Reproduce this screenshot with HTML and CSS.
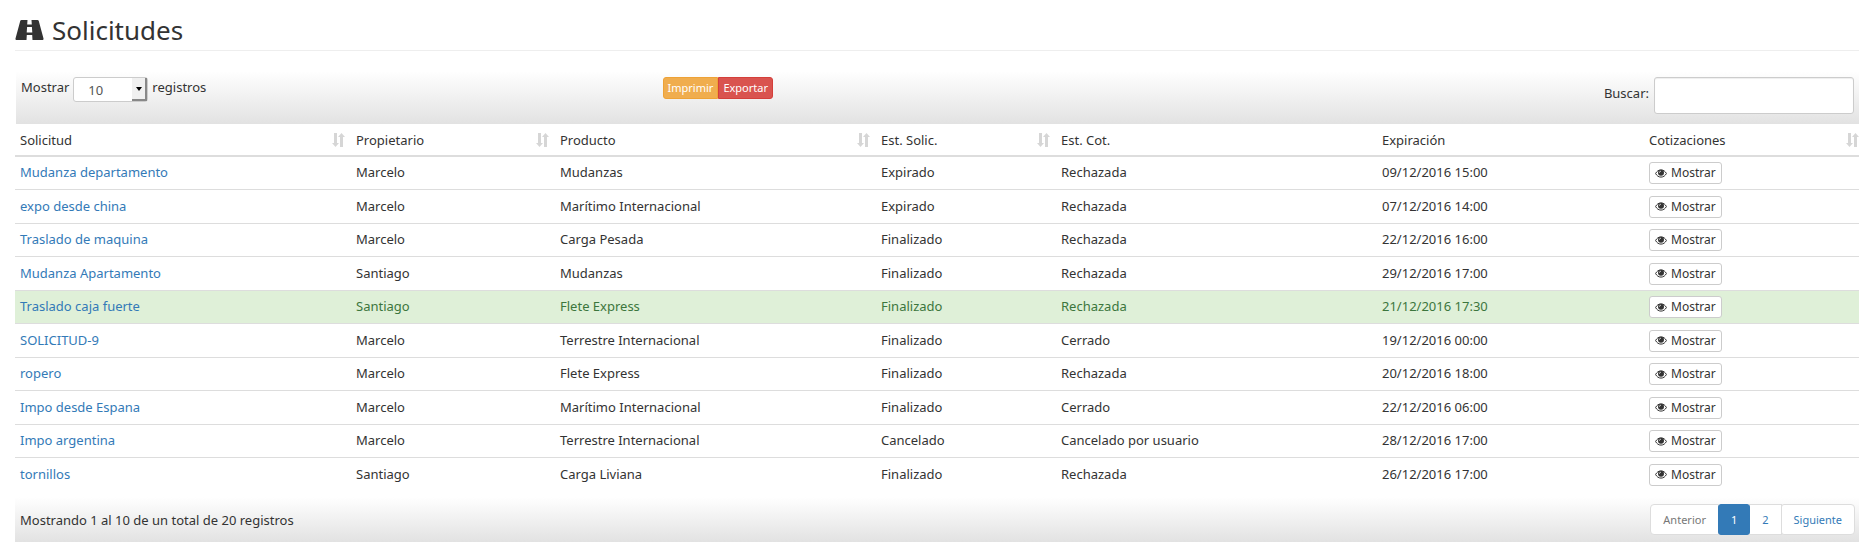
FILE: index.html
```html
<!DOCTYPE html>
<html lang="es">
<head>
<meta charset="utf-8">
<title>Solicitudes</title>
<link rel="stylesheet" href="styles.css">
</head>
<body>
<svg class="sprite" aria-hidden="true">
  <symbol id="eye" viewBox="0 0 24 18">
    <path d="M1.200 9C3.500 4.500 7.300 1.800 12 1.800S20.500 4.500 22.800 9C20.500 13.500 16.700 16.200 12 16.200S3.500 13.500 1.200 9z" fill="none" stroke="currentColor" stroke-width="2"/>
    <circle cx="12" cy="7.500" r="6"/>
    <path d="M8.800 7.500A3.200 3.200 0 0 1 12 4.300" fill="none" stroke="#fff" stroke-width="1.400"/>
  </symbol>
  <symbol id="sort" viewBox="0 0 13 14">
    <path d="M2 0h3v10h2l-3.500 4L0 10h2zM8 14h3V4h2L9.500 0 6 4h2z"/>
  </symbol>
</svg>
<main class="page">
  <h1 class="title">
    <svg class="road" viewBox="0 0 28 20" aria-hidden="true"><path fill-rule="evenodd" d="M6 0h6l-.3 4.500h4.600L16 0h6c.6 0 1 .3 1.200.8L28 18.500c.2.900-.2 1.500-1 1.500H17l-.3-5h-5.400L11 20H1c-.8 0-1.200-.6-1-1.500L4.800.8C5 .3 5.400 0 6 0zM11.600 7l-.4 5.500h5.600L16.400 7z"/></svg>
    Solicitudes
  </h1>
  <div class="toolbar">
    <div class="length">
      <label for="length">Mostrar</label>
      <span class="picker">
        <select id="length"><option>10</option><option>25</option><option>50</option></select>
        <span class="picker-arrow"></span>
      </span>
      <label for="length">registros</label>
    </div>
    <div class="actions"><button class="action print" type="button">Imprimir</button><button class="action export" type="button">Exportar</button></div>
    <div class="search">
      <label for="search">Buscar:</label>
      <input id="search" type="search">
    </div>
  </div>
  <table class="requests">
    <colgroup><col class="c-name"><col class="c-owner"><col class="c-product"><col class="c-state"><col class="c-quote"><col class="c-date"><col></colgroup>
    <thead>
      <tr>
        <th><span class="head">Solicitud<svg class="sort"><use href="#sort"/></svg></span></th>
        <th><span class="head">Propietario<svg class="sort"><use href="#sort"/></svg></span></th>
        <th><span class="head">Producto<svg class="sort"><use href="#sort"/></svg></span></th>
        <th><span class="head">Est. Solic.<svg class="sort"><use href="#sort"/></svg></span></th>
        <th>Est. Cot.</th>
        <th>Expiración</th>
        <th><span class="head">Cotizaciones<svg class="sort"><use href="#sort"/></svg></span></th>
      </tr>
    </thead>
    <tbody>
      <tr><td><a href="#">Mudanza departamento</a></td><td>Marcelo</td><td>Mudanzas</td><td>Expirado</td><td>Rechazada</td><td>09/12/2016 15:00</td><td><button class="show" type="button"><svg class="eye"><use href="#eye"/></svg>Mostrar</button></td></tr>
      <tr><td><a href="#">expo desde china</a></td><td>Marcelo</td><td>Marítimo Internacional</td><td>Expirado</td><td>Rechazada</td><td>07/12/2016 14:00</td><td><button class="show" type="button"><svg class="eye"><use href="#eye"/></svg>Mostrar</button></td></tr>
      <tr><td><a href="#">Traslado de maquina</a></td><td>Marcelo</td><td>Carga Pesada</td><td>Finalizado</td><td>Rechazada</td><td>22/12/2016 16:00</td><td><button class="show" type="button"><svg class="eye"><use href="#eye"/></svg>Mostrar</button></td></tr>
      <tr><td><a href="#">Mudanza Apartamento</a></td><td>Santiago</td><td>Mudanzas</td><td>Finalizado</td><td>Rechazada</td><td>29/12/2016 17:00</td><td><button class="show" type="button"><svg class="eye"><use href="#eye"/></svg>Mostrar</button></td></tr>
      <tr class="success"><td><a href="#">Traslado caja fuerte</a></td><td>Santiago</td><td>Flete Express</td><td>Finalizado</td><td>Rechazada</td><td>21/12/2016 17:30</td><td><button class="show" type="button"><svg class="eye"><use href="#eye"/></svg>Mostrar</button></td></tr>
      <tr><td><a href="#">SOLICITUD-9</a></td><td>Marcelo</td><td>Terrestre Internacional</td><td>Finalizado</td><td>Cerrado</td><td>19/12/2016 00:00</td><td><button class="show" type="button"><svg class="eye"><use href="#eye"/></svg>Mostrar</button></td></tr>
      <tr><td><a href="#">ropero</a></td><td>Marcelo</td><td>Flete Express</td><td>Finalizado</td><td>Rechazada</td><td>20/12/2016 18:00</td><td><button class="show" type="button"><svg class="eye"><use href="#eye"/></svg>Mostrar</button></td></tr>
      <tr><td><a href="#">Impo desde Espana</a></td><td>Marcelo</td><td>Marítimo Internacional</td><td>Finalizado</td><td>Cerrado</td><td>22/12/2016 06:00</td><td><button class="show" type="button"><svg class="eye"><use href="#eye"/></svg>Mostrar</button></td></tr>
      <tr><td><a href="#">Impo argentina</a></td><td>Marcelo</td><td>Terrestre Internacional</td><td>Cancelado</td><td>Cancelado por usuario</td><td>28/12/2016 17:00</td><td><button class="show" type="button"><svg class="eye"><use href="#eye"/></svg>Mostrar</button></td></tr>
      <tr><td><a href="#">tornillos</a></td><td>Santiago</td><td>Carga Liviana</td><td>Finalizado</td><td>Rechazada</td><td>26/12/2016 17:00</td><td><button class="show" type="button"><svg class="eye"><use href="#eye"/></svg>Mostrar</button></td></tr>
    </tbody>
  </table>
  <div class="footer">
    <p class="info">Mostrando 1 al 10 de un total de 20 registros</p>
    <nav class="pages" aria-label="Páginas">
      <a class="page-link disabled" href="#">Anterior</a>
      <a class="page-link active" href="#">1</a>
      <a class="page-link" href="#">2</a>
      <a class="page-link" href="#">Siguiente</a>
    </nav>
  </div>
</main>
</body>
</html>
```
FILE: styles.css
```css
* { box-sizing: border-box; }
body {
  margin: 0;
  overflow-x: hidden;
  background: #fff;
  color: #333;
  font: 13px/20px "Noto Sans", "Open Sans", sans-serif;
}
button, input, select { font: inherit; color: inherit; }
a { color: #337ab7; text-decoration: none; }
.sprite { position: absolute; width: 0; height: 0; }
.page { padding: 10px 0 12px 15px; }
.title {
  display: flex;
  align-items: center;
  gap: 8px;
  height: 41px;
  margin: 0 0 20px;
  padding-bottom: 1px;
  border-bottom: 1px solid #eee;
  font-size: 26px;
  font-weight: 400;
  line-height: 36px;
}
.road { width: 29px; height: 20px; fill: #333; }

.toolbar {
  display: grid;
  grid-template-columns: 35% 1fr auto;
  align-items: start;
  margin-left: 1px;
  padding: 6px 5px 10px;
  background: linear-gradient(#fff, #e2e2e2);
}
.length { display: flex; align-items: flex-start; gap: 4px; }
.picker { position: relative; display: flex; }
.picker select {
  width: 75px;
  height: 25px;
  padding: 0 14px;
  appearance: none;
  background: #fff;
  border: 1px solid #ccc;
  border-radius: 3px;
  color: #555;
}
.picker-arrow {
  position: absolute;
  top: 1px;
  right: 1px;
  bottom: 1px;
  display: grid;
  place-items: center;
  width: 15px;
  background: #f0f0f0;
  border: solid #888;
  border-width: 0 2px 2px 0;
  pointer-events: none;
}
.picker-arrow::before {
  content: "";
  border: solid transparent;
  border-width: 4px 3px 0;
  border-top-color: #000;
}
.actions { display: flex; }
.action {
  height: 22px;
  padding: 0 4px;
  border: 1px solid;
  color: #fff;
  font-size: 11px;
  line-height: 20px;
}
.print { background: #f0ad4e; border-color: #eea236; border-radius: 3px 0 0 3px; }
.export { background: #d9534f; border-color: #d43f3a; border-radius: 0 3px 3px 0; }
.search { display: flex; align-items: flex-start; gap: 5px; }
.search label { line-height: 33px; }
.search input {
  width: 200px;
  height: 37px;
  padding: 0 12px;
  background: #fff;
  border: 1px solid #ccc;
  border-radius: 3px;
  box-shadow: inset 0 1px 1px #eee;
}

.requests {
  width: calc(100% + 6px);
  border-collapse: separate;
  border-spacing: 0;
  table-layout: fixed;
}
.c-name { width: 336px; }
.c-owner { width: 204px; }
.c-product, .c-quote { width: 321px; }
.c-state { width: 180px; }
.c-date { width: 267px; }
.requests th {
  height: 33px;
  padding: 0 6px 0 5px;
  border-bottom: 2px solid #ddd;
  font-weight: 400;
  text-align: left;
}
.head { display: flex; align-items: center; justify-content: space-between; }
.sort { width: 13px; height: 14px; fill: #d6d6d6; }
.requests td { height: 33px; padding: 0 5px 2px; border-top: 1px solid #ddd; }
.requests td:last-child { padding-bottom: 0; }
.requests tr:nth-child(even) td { height: 34px; }
.requests tr:first-child td { height: 32px; border-top: 0; }
.success td { background: #dff0d8; color: #3c763d; }
.show {
  display: flex;
  align-items: center;
  gap: 4px;
  height: 22px;
  padding: 0 5px;
  background: #fff;
  border: 1px solid #ccc;
  border-radius: 3px;
  color: #333;
  font-size: 12px;
  line-height: 18px;
}
.eye { width: 12px; height: 9px; fill: #333; }

.footer {
  display: flex;
  justify-content: space-between;
  align-items: center;
  margin-top: 6px;
  padding: 7px 4px 7px 5px;
  background: linear-gradient(#fff, #e2e2e2);
}
.info { margin: 0; }
.pages { display: flex; }
.page-link {
  height: 31px;
  margin-left: -1px;
  padding: 5px 12px;
  background: #fff;
  border: 1px solid #ddd;
  font-size: 11px;
  line-height: 19px;
}
.page-link:first-child { border-radius: 4px 0 0 4px; }
.page-link:last-child { border-radius: 3px 4px 4px 3px; }
.page-link.disabled { color: #777; }
.page-link.active {
  z-index: 1;
  background: #337ab7;
  border-color: #337ab7;
  border-radius: 3px;
  color: #fff;
}
```
